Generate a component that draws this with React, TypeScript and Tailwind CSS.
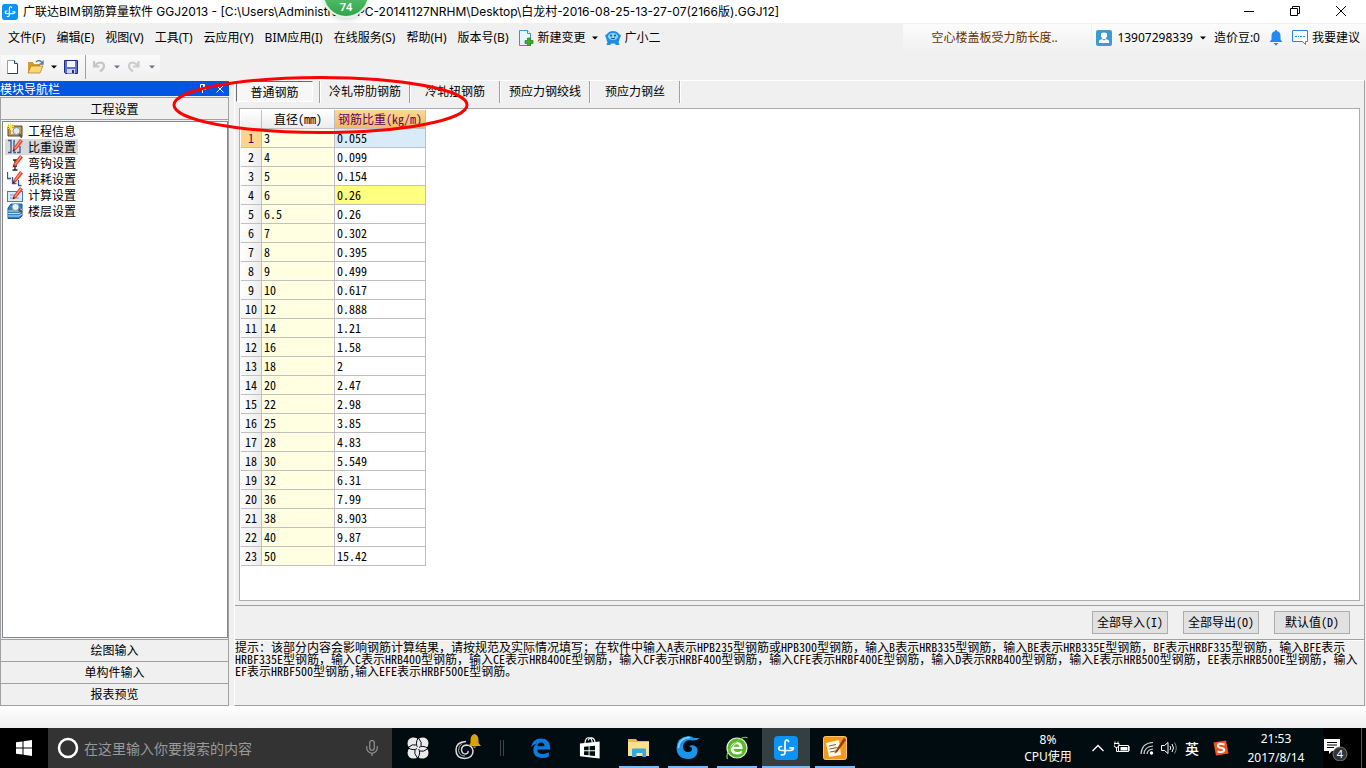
import type { ReactNode } from "react";
import { Mic } from "lucide-react";

const menus = ["文件(F)", "编辑(E)", "视图(V)", "工具(T)", "云应用(Y)", "BIM应用(I)", "在线服务(S)", "帮助(H)", "版本号(B)"];

const tabs = ["冷轧带肋钢筋", "冷轧扭钢筋", "预应力钢绞线", "预应力钢丝"];

const rows = [
    ["3", "0.055"], ["4", "0.099"], ["5", "0.154"], ["6", "0.26"], ["6.5", "0.26"], ["7", "0.302"],
    ["8", "0.395"], ["9", "0.499"], ["10", "0.617"], ["12", "0.888"], ["14", "1.21"], ["16", "1.58"],
    ["18", "2"], ["20", "2.47"], ["22", "2.98"], ["25", "3.85"], ["28", "4.83"], ["30", "5.549"],
    ["32", "6.31"], ["36", "7.99"], ["38", "8.903"], ["40", "9.87"], ["50", "15.42"],
];

const hints = [
    "提示：该部分内容会影响钢筋计算结果，请按规范及实际情况填写；在软件中输入A表示HPB235型钢筋或HPB300型钢筋，输入B表示HRB335型钢筋，输入BE表示HRB335E型钢筋，BF表示HRBF335型钢筋，输入BFE表示",
    "HRBF335E型钢筋，输入C表示HRB400型钢筋，输入CE表示HRB400E型钢筋，输入CF表示HRBF400型钢筋，输入CFE表示HRBF400E型钢筋，输入D表示RRB400型钢筋，输入E表示HRB500型钢筋，EE表示HRB500E型钢筋，输入",
    "EF表示HRBF500型钢筋,输入EFE表示HRBF500E型钢筋。",
];

// Half-width forms for the Latin runs only, punctuation such as ， keeps its full width
function Mixed({ text }: { text: string }) {
    return (
        <>
            {text.split(/([\x20-\x7e]+)/).map((part, i) =>
                i % 2 ? <span key={i} className="[font-feature-settings:'hwid']">{part}</span> : part
            )}
        </>
    );
}

function Arrow({ faded = false }: { faded?: boolean }) {
    return (
        <svg className={faded ? "w-[6px] h-[4px] text-gray-500" : "w-[6px] h-[4px] text-black"} viewBox="0 0 6 4">
            <path d="M0 0.5h6L3 3.5z" fill="currentColor" />
        </svg>
    );
}

function AppLogo({ className }: { className: string }) {
    return (
        <svg className={className} viewBox="0 0 24 24">
            <rect width="24" height="24" rx="4" fill="#0b93f5" />
            <path d="M14.500 5.500Q14 3.800 12.300 4.200 11 4.600 11 6.500V16.500Q11 19.500 7.500 18.800M7.500 10.500Q4.800 10.300 4.800 12.500 5 14.500 7.500 14.500H16.500Q19.500 14.300 19.300 11.800H16" fill="none" stroke="#fff" strokeWidth="1.700" strokeLinecap="round" />
        </svg>
    );
}

function Pencil() {
    return (
        <>
            <path d="M6 9.500L13 0l3 2.500L9 11l-3 1z" fill="#e8442c" />
            <path d="M8 9.500L14 1.500" stroke="#ffa08a" strokeWidth="1.200" />
            <path d="M5.500 12.500l.8-2.500 1.800 1.400z" fill="#3c2c24" />
        </>
    );
}

const navItems: { label: string; icon: ReactNode }[] = [
    {
        label: "工程信息",
        icon: (
            <>
                <path d="M1 3h14v10H1z" fill="#c99b45" stroke="#5d4520" />
                <path d="M4 5h9v6H4z" fill="#f4e2b0" />
                <circle cx="9.500" cy="8" r="3.500" fill="#d8ecfa" stroke="#8595a5" />
                <path d="M12 11l3 3.500" stroke="#555" strokeWidth="2" />
                <path d="M3.500 0v7M0 3.500h7M1 1l5 5M6 1L1 6" stroke="#ffe066" />
            </>
        ),
    },
    {
        label: "比重设置",
        icon: (
            <>
                <path d="M1 1.500h3v12H1M8 2H7v11.500h2M10 13.500h3V7" fill="none" stroke="#34589d" strokeWidth="1.300" />
                <Pencil />
            </>
        ),
    },
    {
        label: "弯钩设置",
        icon: (
            <>
                <path d="M6 5h4M8 5v10M5.500 15h5M6 11h4" fill="none" stroke="#222" strokeWidth="1.300" />
                <Pencil />
            </>
        ),
    },
    {
        label: "损耗设置",
        icon: (
            <>
                <path d="M.500 1v6.500H4M5.500 6v6.500h4M11.500 9v5.500h3" fill="none" stroke="#34589d" strokeWidth="1.300" />
                <Pencil />
            </>
        ),
    },
    {
        label: "计算设置",
        icon: (
            <>
                <rect x="0.500" y="4.500" width="15" height="10" fill="#dcebfb" stroke="#3f7ac0" />
                <path d="M3 8h5M3 11h9" stroke="#6a94c9" />
                <Pencil />
            </>
        ),
    },
    {
        label: "楼层设置",
        icon: (
            <>
                <path d="M1 5l3-4h11v12l-3 2.500H1z" fill="#2f83c4" stroke="#1c568c" />
                <path d="M1 8h11l3-2M1 10.500h11l3-2M1 13h11l3-2" fill="none" stroke="#bfe2fa" />
                <circle cx="8.500" cy="4" r="3.500" fill="#e3f1fa" stroke="#8b9dab" />
                <path d="M11.500 6.500l3.500 3" stroke="#6b4d2c" strokeWidth="2" />
            </>
        ),
    },
];

function TitleBar() {
    return (
        <header className="h-[23px] bg-white flex items-center shrink-0">
            <AppLogo className="w-4 h-4 ml-[2px]" />
            <h1 className="ml-[5px] text-[12px] whitespace-nowrap font-['Inter','Noto_Sans_CJK_SC',sans-serif]">
                广联达BIM钢筋算量软件 GGJ2013 - [C:\Users\Administrator.PC-20141127NRHM\Desktop\白龙村-2016-08-25-13-27-07(2166版).GGJ12]
            </h1>
            <div className="ml-auto mr-[2px] flex items-center pb-[2px]">
                <button aria-label="最小化" className="w-[46px] h-5 flex items-center justify-center">
                    <svg className="w-[10px] h-[10px]" viewBox="0 0 10 10"><path d="M0 5.500h10" stroke="#000" /></svg>
                </button>
                <button aria-label="还原" className="w-[46px] h-5 flex items-center justify-center">
                    <svg className="w-[10px] h-[10px]" viewBox="0 0 10 10"><path d="M.500 2.500h7v7h-7zM2.500 2.500v-2h7v7h-2" fill="none" stroke="#000" /></svg>
                </button>
                <button aria-label="关闭" className="w-[46px] h-5 flex items-center justify-center">
                    <svg className="w-[10px] h-[10px]" viewBox="0 0 10 10"><path d="M0 0l10 10M10 0L0 10" stroke="#000" /></svg>
                </button>
            </div>
        </header>
    );
}

function MenuBar() {
    return (
        <nav className="h-[30px] flex items-center shrink-0 text-[12px] whitespace-nowrap">
            <div className="flex gap-[11px] pl-2">
                {menus.map((m) => <button key={m}>{m}</button>)}
            </div>
            <button className="flex items-center ml-[9px]">
                <svg className="w-4 h-4" viewBox="0 0 16 16">
                    <path d="M1.500 .500h8l3 3v12h-11z" fill="#e6f4fd" stroke="#4391c5" />
                    <path d="M9.500 .500v3h3" fill="#fff" stroke="#4391c5" />
                    <path d="M9.500 8h3v2.500H15v3h-2.500V16h-3v-2.500H7v-3h2.500z" fill="#48ac22" stroke="#2c7d12" strokeWidth=".7" />
                </svg>
                <span className="ml-1">新建变更</span>
                <span className="ml-[6px]"><Arrow /></span>
            </button>
            <button className="flex items-center ml-[7px]">
                <svg className="w-4 h-4" viewBox="0 0 16 16">
                    <path d="M2 4Q4 1 8 1t6 3l2 1.500L14.500 9q0 2-1 3l1 3h-3.500l-1.500-1.500h-3L5 15H1.500l1-3q-1-1-1-3L0 5.500z" fill="#1c8fe2" />
                    <ellipse cx="8" cy="6.500" rx="5" ry="3.500" fill="#8fd2f8" />
                    <circle cx="6" cy="5.500" r="1" fill="#0d4f8a" /><circle cx="10" cy="5.500" r="1" fill="#0d4f8a" />
                    <path d="M6 8q2 1.500 4 0" fill="none" stroke="#0d4f8a" />
                </svg>
                <span className="ml-1">广小二</span>
            </button>
            <div className="ml-auto flex">
                <a href="#" className="w-[188px] h-7 pl-7 flex items-center text-[#663300] bg-gradient-to-b from-[#fcfcfc] to-[#f0f0f0]">
                    空心楼盖板受力筋长度..
                </a>
                <div className="ml-px h-7 pl-1 pr-[6px] flex items-center bg-gradient-to-b from-[#fcfcfc] to-[#f0f0f0]">
                    <svg className="w-4 h-4" viewBox="0 0 16 16">
                        <rect width="16" height="16" rx="2" fill="#3c9cd2" />
                        <path d="M5 3.500q3-2 6 0v3L9.500 9h-3L5 6.500z" fill="#fff" />
                        <path d="M3 13V10.500l3-1.500 2 1.500L10 9l3 1.500V13z" fill="#fff" />
                    </svg>
                    <button className="ml-[5px] flex items-center gap-[7px]">13907298339 <Arrow /></button>
                    <span className="ml-2">造价豆:0</span>
                    <svg className="ml-[9px] w-[14px] h-4" viewBox="0 0 14 16">
                        <path d="M7 0q1 0 1.200 1.200Q11.500 2 11.500 6v3.500L13.500 12H.500l2-2.500V6q0-4 3.300-4.800Q6 0 7 0z" fill="#2388f2" />
                        <path d="M4.500 13h5L7 15.800z" fill="#2388f2" />
                    </svg>
                    <button className="ml-[9px] flex items-center gap-1">
                        <svg className="w-4 h-4" viewBox="0 0 16 16">
                            <path d="M.500 .500h15v11h-2v3l-3-3H.500z" fill="#fff" stroke="#2388f2" />
                            <path d="M3 6.500h2M6 6.500h1M8 6.500h2M11 6.500h2" stroke="#2388f2" />
                        </svg>
                        我要建议
                    </button>
                </div>
            </div>
        </nav>
    );
}

function ToolBar() {
    return (
        <div className="h-7 flex items-center shrink-0">
            <div className="h-6 w-[159px] ml-px pl-1 flex items-center bg-gradient-to-b from-[#fafafa] to-[#f0f0f0]">
                <button aria-label="新建">
                    <svg className="block w-4 h-4" viewBox="0 0 16 16">
                        <path d="M2.500 1.500h7l3 3v10h-10z" fill="#fff" stroke="#8fa0b3" />
                        <path d="M9.500 1.500v3h3" fill="#d9e4ef" stroke="#2b4460" />
                        <path d="M12.500 5v9.500h-10" fill="none" stroke="#24405f" />
                    </svg>
                </button>
                <button aria-label="打开" className="ml-[6px] flex items-center gap-[6px]">
                    <svg className="w-[18px] h-4" viewBox="0 0 18 16">
                        <path d="M1 3h5l1 2h6v9H1z" fill="#d79a2b" />
                        <path d="M4 7h12l-3 7H1z" fill="#fbd77a" stroke="#b27a1c" strokeWidth=".7" />
                        <path d="M9 3q4-3 6 1M16 1.500V5h-3.500" fill="none" stroke="#52749c" strokeWidth="1.300" />
                    </svg>
                    <Arrow />
                </button>
                <button aria-label="保存" className="ml-[6px]">
                    <svg className="block w-4 h-4" viewBox="0 0 16 16">
                        <path d="M1.500 1.500h13v13h-12l-1-1z" fill="#5a70dc" stroke="#1d2c85" />
                        <path d="M4 2h8v6H4z" fill="#f4f6fb" />
                        <path d="M4 10h8v4.500H4z" fill="#d4d8e4" /><path d="M9 11h2v3H9z" fill="#1d2c85" />
                    </svg>
                </button>
                <div className="ml-[6px] w-px h-6 bg-[#a0a0a0]" />
                <button aria-label="撤销" disabled className="ml-[5px] flex items-center gap-[7px]">
                    <svg className="w-4 h-4" viewBox="0 0 16 16">
                        <path d="M3 2v5.500h5.500M3.500 7Q6 3.500 10 3.500q3 .5 3 3.500t-4 5.500" fill="none" stroke="#c6c6c6" strokeWidth="2.200" />
                    </svg>
                    <Arrow faded />
                </button>
                <button aria-label="恢复" disabled className="ml-[6px] flex items-center gap-[7px]">
                    <svg className="w-4 h-4" viewBox="0 0 16 16">
                        <path d="M12.500 2v5.500H7M12 7Q9.500 3.500 6 3.500q-3 .5-3 3.500t4 5.500" fill="none" stroke="#cdcdcd" strokeWidth="2.200" />
                    </svg>
                    <Arrow faded />
                </button>
            </div>
        </div>
    );
}

function SideBar() {
    return (
        <aside className="w-[229px] shrink-0 flex flex-col text-[12px]">
            <div className="h-[15px] mb-px bg-[#0054e3] text-white flex items-center leading-none">
                <h2>模块导航栏</h2>
                <button aria-label="固定" className="ml-auto">
                    <svg className="block w-[9px] h-[9px]" viewBox="0 0 9 9"><path d="M2.500 5.500V.500h4v5M5.500 0v5M1 5.500h7M4.500 5.500V9" fill="none" stroke="#fff" /></svg>
                </button>
                <button aria-label="关闭导航栏" className="ml-[9px] mr-[5px]">
                    <svg className="block w-[8px] h-[8px]" viewBox="0 0 8 8"><path d="M.500 .500l7 7M7.500 .500l-7 7" stroke="#fff" /></svg>
                </button>
            </div>
            <div className="flex-1 flex flex-col border border-[#a0a0a0]">
                <button className="h-[22px] border-b border-[#a0a0a0]">工程设置</button>
                <ul className="flex-1 m-px mr-0 pt-px px-[2px] bg-white border border-[#828790]">
                    {navItems.map((item, i) => (
                        <li key={item.label} className="flex">
                            <button className={i === 1 ? "h-4 px-[2px] flex items-center gap-[5px] bg-[#d9d9d9] leading-4" : "h-4 px-[2px] flex items-center gap-[5px] leading-4"}>
                                <svg className="w-4 h-4" viewBox="0 0 16 16">{item.icon}</svg>
                                {item.label}
                            </button>
                        </li>
                    ))}
                </ul>
                {["绘图输入", "单构件输入", "报表预览"].map((t) => (
                    <button key={t} className="h-[22px] pb-px border-t border-[#a0a0a0]">{t}</button>
                ))}
            </div>
        </aside>
    );
}

function WeightTable() {
    return (
        <table className="border-separate border-spacing-0 table-fixed w-[185px] text-[12px] leading-[18px] [font-feature-settings:'hwid']">
            <colgroup>
                <col className="w-[21px]" />
                <col className="w-[73px]" />
                <col className="w-[91px]" />
            </colgroup>
            <thead>
                <tr className="whitespace-nowrap">
                    <th className="h-[19px] p-0 border-r border-b border-[#c0c0c0] bg-gradient-to-b from-white to-[#ececec]" aria-label="序号" />
                    <th className="h-[19px] p-0 font-normal border-r border-b border-[#c0c0c0] bg-gradient-to-b from-white to-[#ececec]">直径(mm)</th>
                    <th className="h-[19px] p-0 font-normal border-r border-b border-[#c0c0c0] bg-gradient-to-b from-[#fbd795] to-[#eebc62] text-[#660066]">钢筋比重(kg/m)</th>
                </tr>
            </thead>
            <tbody>
                {rows.map(([size, weight], i) => (
                    <tr key={size}>
                        <th className={`h-[19px] p-0 font-normal border-r border-b border-[#c0c0c0] ${i === 0 ? "bg-[#ffd58d] text-[#660066]" : "bg-gradient-to-r from-white to-[#ececec]"}`}>
                            {i + 1}
                        </th>
                        <td className="h-[19px] py-0 px-[2px] border-r border-b border-[#c0c0c0] bg-[#ffffe1]">{size}</td>
                        <td className={`h-[19px] py-0 px-[2px] border-r border-b border-[#c0c0c0] ${i === 0 ? "bg-[#d9eaf9]" : i === 3 ? "bg-[#ffff80]" : "bg-white"}`}>
                            {weight}
                        </td>
                    </tr>
                ))}
            </tbody>
        </table>
    );
}

function Workspace() {
    return (
        <main className="flex-1 min-w-0 -mt-px mr-px flex flex-col border-t border-l border-white border-b border-b-[#a0a0a0] border-r border-r-[#a0a0a0] text-[12px]">
            <div className="h-[22px] flex whitespace-nowrap">
                <div className="w-[85px] pl-px pr-[6px] border-r border-[#a0a0a0] flex">
                    <button className="flex-1 h-[21px] border-t border-l border-[#696969] border-b border-b-white border-r border-r-white bg-[#f7f7f7]">普通钢筋</button>
                </div>
                {tabs.map((t) => (
                    <button key={t} className="w-[90px] pb-[2px] border-l border-l-white border-r border-r-[#a0a0a0]">{t}</button>
                ))}
                <div className="w-px bg-white" />
            </div>
            <div className="flex-1 mt-[5px] mx-1 mb-1 p-px bg-white border border-[#abadb3]">
                <WeightTable />
            </div>
            <div className="h-[35px] pb-px pr-[14px] flex items-center justify-end gap-[15px] border-t border-[#a0a0a0] border-b">
                {["全部导入(I)", "全部导出(O)", "默认值(D)"].map((t) => (
                    <button key={t} className="w-[76px] h-[23px] pb-px border border-[#adadad] bg-[#e1e1e1] whitespace-nowrap"><Mixed text={t} /></button>
                ))}
            </div>
            <div className="h-[65px] leading-3 whitespace-nowrap border-t border-white">
                {hints.map((h) => <p key={h}><Mixed text={h} /></p>)}
            </div>
        </main>
    );
}

const pinned: { name: string; state: string; icon: ReactNode }[] = [
    {
        name: "Edge", state: "",
        icon: <path d="M1 11Q3 1.500 12 1.500q10 0 10 10.500v1.500H8q0 5 6 5 3.500 0 6.500-1.800v4.500Q17.500 23 13 23 3.500 22.500 3.500 14q0-4.500 4.500-7Q3.500 7.500 1 11zM8.300 10H15.800Q15.800 6 12 6T8.300 10z" fill="#0a7be0" />,
    },
    {
        name: "应用商店", state: "",
        icon: (
            <>
                <path d="M1 7l21.500-2v18.500L1 21z" fill="#fff" />
                <path d="M6.500 6.500Q7 .800 10.500 .800t4 5.200M10 3.500q1-3 4-2.500T17.500 6" fill="none" stroke="#fff" strokeWidth="1.300" />
                <path d="M5.500 10.500l5-.4v4.400h-5zM11.500 10l6-.5v5h-6zM5.500 15.500h5V20l-5-.500zM11.500 15.500h6v5.200l-6-.6z" fill="#000c10" />
            </>
        ),
    },
    {
        name: "文件资源管理器", state: "open",
        icon: (
            <>
                <path d="M1 3h8l1.500 2H22v15H1z" fill="#e9b949" />
                <path d="M1 6h21v14H1z" fill="#fde08c" />
                <path d="M5 21v-7.500q0-1 1-1h12q1 0 1 1V21h-3.500v-4h-6v4z" fill="#36a9dc" />
            </>
        ),
    },
    {
        name: "浏览器", state: "open",
        icon: (
            <>
                <path d="M23.500 2q-3 3-7 2.500Q8 3.500 7 10q0 6 5 6 4 0 4-3 0-2-3-2.500 2-2 5-1 4 1.500 3.500 6-1 7.500-9 7.500Q1 23 .500 12 1 1 12 0q4 0 6 2z" fill="#1d94e8" />
                <path d="M14 1.500Q3 2 2.500 12" fill="none" stroke="#7fd0fb" strokeWidth="1.500" />
            </>
        ),
    },
    {
        name: "360浏览器", state: "open",
        icon: (
            <>
                <circle cx="12" cy="12" r="10" fill="#58b82c" stroke="#e1f4d5" strokeWidth="1.200" />
                <path d="M17.500 13H8.500q.500 3 3.800 3 2 0 4.500-1.500v2.800q-2.300 1.200-5 1.200-6.300-.300-6.300-6.300Q6 6.300 12 6q6 .300 5.500 7zM8.700 10.700h5.800Q14 8.300 11.700 8.300T8.700 10.700z" fill="#fff" />
                <path d="M2.500 23Q0 17 9 8T22.500 2" fill="none" stroke="#7ad348" strokeWidth="1.200" />
            </>
        ),
    },
    { name: "广联达BIM钢筋算量软件", state: "active", icon: null },
    {
        name: "写字板", state: "open",
        icon: (
            <>
                <rect x=".500" y=".500" width="23" height="23" rx="2" fill="#f59a16" stroke="#ffc667" />
                <path d="M3 7l13-3 2 15-12 2z" fill="#fff8e8" />
                <path d="M6 10l7-1.500M6.500 13l8-1.500M7 16l8-1.500" stroke="#7b6444" />
                <path d="M21 1.500L12.500 15l-1 2.500 2.500-1.300L23 4z" fill="#9a3b11" />
            </>
        ),
    },
];

function TaskBar() {
    return (
        <footer className="h-10 shrink-0 flex bg-[#000c10] text-white">
            <button aria-label="开始" className="w-12 bg-black flex items-center justify-center">
                <svg className="w-4 h-4" viewBox="0 0 16 16"><path d="M0 2.300L6.500 1.400V7.500H0zM7.500 1.200L16 0v7.500H7.500zM0 8.500h6.500v6.100L0 13.700zM7.500 8.500H16V16l-8.500-1.200z" fill="#fff" /></svg>
            </button>
            <label className="w-[344px] px-[9px] bg-[#333333] flex items-center">
                <svg className="w-[22px] h-[22px] shrink-0" viewBox="0 0 22 22"><circle cx="11" cy="11" r="9" fill="none" stroke="#fff" strokeWidth="2.500" /></svg>
                <input aria-label="搜索" placeholder="在这里输入你要搜索的内容" className="ml-[5px] flex-1 min-w-0 bg-transparent outline-none text-[14px] placeholder:text-[#999999]" />
                <Mic className="w-[18px] h-[18px] mr-[2px] text-[#999999]" strokeWidth={1.500} />
            </label>
            <div className="ml-[2px] flex gap-px">
                <button aria-label="风扇" className="w-12 flex items-center justify-center">
                    <svg className="w-[22px] h-[22px]" viewBox="0 0 22 22">
                        <path d="M11 2Q9 0 5.500 .500.500 1.500 .500 6.500.500 9.500 2.500 11 .500 13 .500 16q.500 5.500 6 5.500 3 0 4.500-1.500 2 2 5.500 1.500 5-1 5-6 0-3-2-4.500 2-2 2-5Q21 .500 15.500 .500 12.500 .500 11 2z" fill="#ebebeb" />
                        {[0, 90, 180, 270].map((a) => (
                            <path key={a} transform={`rotate(${a} 11 11)`} d="M11 11Q7.500 6.500 11.500 0.500M9.300 8Q5.500 6.500 1 10.500" fill="none" stroke="#000c10" strokeWidth="1" />
                        ))}
                        <circle cx="11" cy="11" r="1.200" fill="#ebebeb" />
                    </svg>
                </button>
                <button aria-label="提醒" className="w-12 flex items-center justify-center">
                    <svg className="w-7 h-7" viewBox="0 0 28 28">
                        <path d="M13 7.500Q3 8 3 16t8.500 8.500q8.500-.500 8.500-7.500-.500-5.500-6.500-6-5 .500-5 5 .500 4 4 4 3-.500 2.500-3" fill="none" stroke="#dcdcdc" strokeWidth="1.500" />
                        <path d="M9 9.500Q5.500 12 5.500 16.500q1 5.500 6.500 5.500" fill="none" stroke="#dcdcdc" strokeWidth=".8" />
                        <path d="M21.500 0q4 1 4 6v3l2.500 3H15.500l2-3V6q0-5 4-6zM19.500 12.500h4l-2 1.800z" fill="#dba309" />
                    </svg>
                </button>
                <div className="w-6 pl-2 flex items-center gap-[2px]">
                    <div className="w-px h-4 bg-[#444444]" />
                    <div className="w-px h-4 bg-[#444444]" />
                </div>
                {pinned.map((p) => (
                    <button key={p.name} aria-label={p.name} className={p.state === "active" ? "w-12 h-10 flex flex-col items-center bg-[#333f43]" : "w-12 h-10 flex flex-col items-center"}>
                        <span className="flex-1 flex items-center pt-[2px]">
                            {p.icon ? <svg className={p.state ? "w-6 h-6" : "w-[22px] h-[22px]"} viewBox="0 0 24 24">{p.icon}</svg> : <AppLogo className="w-6 h-6" />}
                        </span>
                        <span className={p.state === "active" ? "h-[2px] w-12 bg-[#76b9ff]" : p.state ? "h-[2px] w-10 bg-[#76b9ff]" : "h-[2px]"} />
                    </button>
                ))}
            </div>
            <div className="ml-auto flex items-center text-[12px] text-center">
                <p className="w-[52px] leading-[17px]">8%<br />CPU使用</p>
                <button aria-label="显示隐藏的图标" className="ml-[17px]">
                    <svg className="block w-[14px] h-4" viewBox="0 0 14 16"><path d="M1.500 11L7 5.500l5.500 5.500" fill="none" stroke="#fff" strokeWidth="1.300" /></svg>
                </button>
                <svg className="ml-[9px] w-4 h-4" viewBox="0 0 16 16">
                    <path d="M4.500 5.500h10v6h-10zM14.500 7h1.500v3h-1.500" fill="none" stroke="#fff" /><path d="M6.500 7h7v3.500h-7z" fill="#fff" />
                    <path d="M0 3.500h5v2q-.500 2-2.500 2T0 5.500zM1 1.500v2M4 1.500v2M2.500 7v4.500h2" fill="none" stroke="#fff" />
                </svg>
                <svg className="ml-[10px] w-[14px] h-[14px]" viewBox="0 0 14 14">
                    <path d="M1 13Q1.500 2 13 1.500M4 13Q4.500 5.500 13 5M7 13q.500-4.500 6-5" fill="none" stroke="#d0d0d0" strokeWidth="1.200" /><circle cx="11.500" cy="12" r="1.700" fill="#fff" />
                </svg>
                <svg className="ml-[7px] w-4 h-4" viewBox="0 0 16 16">
                    <path d="M.500 5.500h3L7 2.500v11l-3.500-3h-3z" fill="none" stroke="#fff" />
                    <path d="M9 6q1.500 2 0 4M11 4q3 4 0 8" fill="none" stroke="#fff" /><path d="M13.500 2.500q3.500 5.500 0 11" fill="none" stroke="#888" />
                </svg>
                <span className="ml-2 text-[14px] font-medium">英</span>
                <svg className="ml-[14px] w-4 h-4" viewBox="0 0 16 16">
                    <path d="M.500 2.500L13 .500l2.500 13L3 15.500z" fill="#f4531c" />
                    <path d="M11.500 4.500Q5 2.500 4.800 5.700q.200 2 3.700 2.300 3 .500 2.700 2.500Q10 13 4.500 11.500" fill="none" stroke="#fff" strokeWidth="2" />
                </svg>
                <time className="ml-3 w-[70px] leading-[19px]">21:53<br />2017/8/14</time>
                <button aria-label="通知" className="ml-3 w-[38px] h-10 bg-black flex items-center">
                    <svg className="w-[26px] h-[26px]" viewBox="0 0 26 26">
                        <path d="M1 4h16v12H9l-3 3v-3H1z" fill="#fff" />
                        <path d="M4 7.500h10M4 10h10M4 12.500h7" stroke="#000" />
                        <circle cx="17" cy="19" r="7" fill="#333" stroke="#777" />
                        <text x="17" y="23" fontSize="11" fill="#fff" textAnchor="middle">4</text>
                    </svg>
                </button>
                <div className="w-[5px] h-10 border-l border-[#555555] bg-black" />
            </div>
        </footer>
    );
}

export default function App() {
    return (
        <div lang="zh-CN" className="relative min-h-screen flex flex-col overflow-hidden bg-[#f0f0f0] text-black font-['Noto_Sans','Noto_Sans_CJK_SC',sans-serif]">
            <TitleBar />
            <MenuBar />
            <ToolBar />
            <div className="flex-1 flex gap-[5px] font-['Noto_Sans_CJK_SC',sans-serif]">
                <SideBar />
                <Workspace />
            </div>
            <div className="h-[22px] shrink-0 bg-gradient-to-b from-white to-[#f0f0f0]" />
            <TaskBar />

            <div className="absolute left-[322px] -top-[30px] w-12 h-12 rounded-full bg-gradient-to-b from-[#7ddb8c] to-[#2ba54b] border-2 border-[#dff2e3] shadow-md flex items-end justify-center text-white text-[11px] leading-[14px] font-semibold pb-[2px]">
                74
            </div>
            <svg className="absolute left-[170px] top-[74px] w-[302px] h-[62px] pointer-events-none" viewBox="0 0 302 62">
                <ellipse cx="150.500" cy="31" rx="146.500" ry="27.500" fill="none" stroke="#ff0000" strokeWidth="3" />
            </svg>
        </div>
    );
}
